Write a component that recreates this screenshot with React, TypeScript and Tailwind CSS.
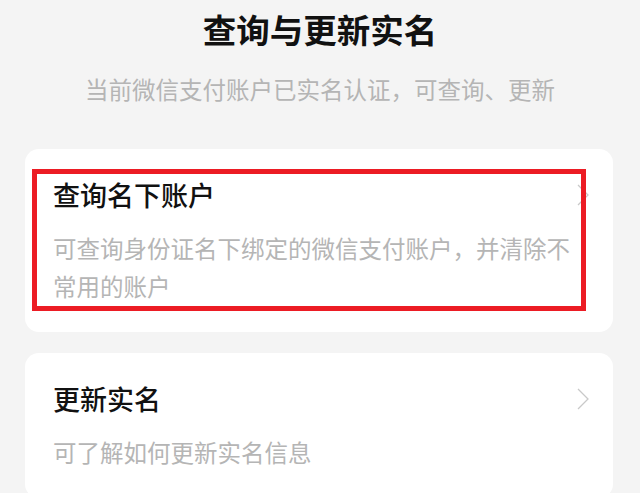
import React from 'react';

const Chevron: React.FC = () => (
  <svg width="12" height="22" viewBox="0 0 12 22" fill="none" className="shrink-0">
    <path d="M1 1l10 10L1 21" stroke="#c9c9c9" strokeWidth="1.3" />
  </svg>
);

const items = [
  {
    title: '查询名下账户',
    desc: '可查询身份证名下绑定的微信支付账户，并清除不常用的账户',
    marked: true,
  },
  {
    title: '更新实名',
    desc: '可了解如何更新实名信息',
    marked: false,
  },
];

const App: React.FC = () => {
  return (
    <div
      className="w-[640px] h-[493px] overflow-hidden bg-[#f4f4f4]"
      style={{ fontFamily: '"Noto Sans CJK SC", "Noto Sans", sans-serif' }}
    >
      {/* Header */}
      <div className="pt-[7px] text-center">
        <h1 className="text-[33.5px] leading-[44px] font-semibold text-[#111]">查询与更新实名</h1>
        <p className="mt-[22px] text-[23.5px] leading-[32px] text-[#b5b5b5]">
          当前微信支付账户已实名认证，可查询、更新
        </p>
      </div>

      {/* Cards */}
      <div className="mt-[44px] ml-[25px] w-[588px] flex flex-col gap-[21px]">
        {items.map((item) => (
          <div key={item.title} className="relative bg-white rounded-[14px] pl-7 pr-6 pt-[26px] pb-[27px]">
            <div className="flex items-start">
              <div className="flex-1">
                <div className="text-[27px] leading-[40px] font-medium text-[#111]">{item.title}</div>
                <div className="mt-[14px] text-[23.5px] leading-[38px] text-[#b5b5b5]">{item.desc}</div>
              </div>
              <div className="h-[40px] flex items-center">
                <Chevron />
              </div>
            </div>
            {item.marked && (
              <div className="absolute left-[7px] top-[20px] w-[554px] h-[142px] border-[5px] border-[#ec1c24]" />
            )}
          </div>
        ))}
      </div>
    </div>
  );
};

export default App;
